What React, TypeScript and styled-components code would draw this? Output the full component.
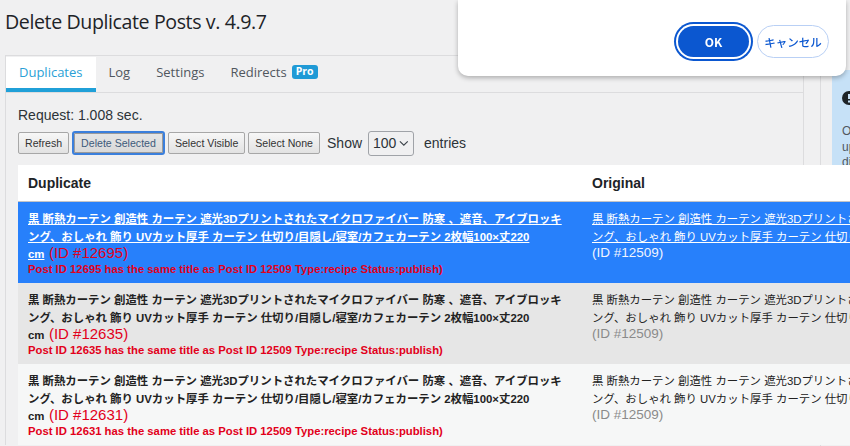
import React from "react";
import styled, { createGlobalStyle, css } from "styled-components";

const GlobalStyle = createGlobalStyle`
    html, body {
        margin: 0;
        padding: 0;
        width: 850px;
        height: 446px;
        overflow: hidden;
        background: #f0f0f1;
    }
    body {
        font-family: "Liberation Sans", "Noto Sans CJK JP", sans-serif;
        color: #1d2327;
    }
`;

const Page = styled.div`
    padding-left: 5px;
`;

const Heading = styled.h1`
    margin: 0;
    height: 55px;
    padding-top: 8px;
    box-sizing: border-box;
    font-family: "Open Sans", sans-serif;
    font-size: 19.6px;
    font-weight: 400;
    letter-spacing: -0.4px;
    color: #1d2327;
`;

const Columns = styled.div`
    display: flex;
    align-items: flex-start;
    gap: 16px;
`;

const Main = styled.div`
    flex: none;
    width: 799px;
    box-sizing: border-box;
    border: 1px solid #dcdcde;
    border-bottom: 0;
`;

const TabBar = styled.ul`
    display: flex;
    margin: 0;
    padding: 1px 0 0;
    list-style: none;
    border-bottom: 1px solid #dcdcde;
`;

const Tab = styled.li<{ $active?: boolean }>`
    display: flex;
    align-items: center;
    gap: 5px;
    height: 35px;
    padding: 0 13px 5px;
    box-sizing: border-box;
    font-family: "Open Sans", sans-serif;
    font-size: 13px;
    color: #50575e;
    ${(p) =>
        p.$active &&
        css`
            background: #fff;
            color: #2a9fd6;
            box-shadow: inset 0 -4px 0 #20a0d8;
        `}
`;

const ProBadge = styled.span`
    display: inline-block;
    padding: 1px 4px 2px;
    border-radius: 3px;
    background: #1f9ad6;
    color: #fff;
    font-family: "Open Sans", sans-serif;
    font-size: 10.5px;
    font-weight: 700;
    line-height: 11px;
`;

const Content = styled.div`
    padding: 13px 0 0 12px;
`;

const Request = styled.div`
    font-size: 14px;
    line-height: 18px;
    color: #2c3338;
`;

const Toolbar = styled.div`
    display: flex;
    align-items: center;
    gap: 3px;
    margin-top: 6px;
    height: 26px;
`;

const Button = styled.button<{ $focused?: boolean }>`
    height: 22px;
    padding: 0 6px;
    border: 1px solid #a7a7a7;
    border-radius: 2px;
    background: linear-gradient(#f7f7f7, #e2e2e2);
    font-family: "Liberation Sans", sans-serif;
    font-size: 10.6px;
    white-space: nowrap;
    color: #333;
    ${(p) =>
        p.$focused &&
        css`
            height: 24px;
            padding: 0 7px;
            border: 2px solid #3b7fdc;
            border-radius: 3px;
            background: linear-gradient(#e6e6e6, #d9d9d9);
            box-shadow: inset 0 0 0 1px #9a9a9a;
            color: #3d5a7a;
        `}
`;

const ShowLabel = styled.span`
    margin-left: 4px;
    font-size: 14px;
    color: #2c3338;
`;

const Select = styled.div`
    display: flex;
    align-items: center;
    gap: 3px;
    height: 25px;
    width: 46px;
    box-sizing: border-box;
    margin: 0 3px;
    padding: 0 4px;
    border: 1px solid #a0a3a8;
    border-radius: 3px;
    font-size: 14px;
    color: #2c3338;
`;

const Table = styled.div`
    position: relative;
    z-index: 1;
    margin-top: 9px;
    width: 1140px;
`;

const Grid = styled.div`
    display: grid;
    grid-template-columns: 564px 576px;
`;

const HeadRow = styled(Grid)`
    height: 36px;
    align-items: center;
    background: #fff;
    border-bottom: 1px solid #c3c4c7;
    font-size: 14px;
    font-weight: 700;
`;

const HeadCell = styled.div`
    padding: 0 10px;
`;

const Row = styled(Grid)<{ $tone: "selected" | "odd" | "even" }>`
    height: 81px;
    background: ${(p) =>
        p.$tone === "selected" ? "#2780fb" : p.$tone === "odd" ? "#e6e6e6" : "#f6f7f7"};
    color: ${(p) => (p.$tone === "selected" ? "#fff" : "#222")};
`;

const Cell = styled.div`
    padding: 8px 10px 0;
    overflow: hidden;
    white-space: nowrap;
    line-height: 16.5px;
`;

const Title = styled.span<{ $bold?: boolean; $link?: boolean }>`
    font-size: 11.4px;
    font-weight: ${(p) => (p.$bold ? 700 : 400)};
    text-decoration: ${(p) => (p.$link ? "underline" : "none")};
`;

const DupId = styled.span`
    font-size: 15px;
    color: #e2001a;
`;

const Note = styled.div`
    margin-top: -2px;
    font-size: 11.3px;
    line-height: 16px;
    font-weight: 700;
    color: #e2001a;
`;

const OrigId = styled.div<{ $light?: boolean }>`
    font-size: 13.5px;
    line-height: 16px;
    color: ${(p) => (p.$light ? "#f1f5ff" : "#8a8a8a")};
`;

const Sidebar = styled.aside`
    flex: none;
    width: 320px;
    height: 400px;
    padding: 15px 0 0 11px;
    box-sizing: border-box;
    border-left: 1px solid #dcdcde;
`;

const Notice = styled.div`
    padding: 20px 10px 0;
    height: 95px;
    background: #c6e1f7;
    font-size: 12px;
    color: #50575e;
    white-space: nowrap;
`;

const NoticeHead = styled.div`
    display: flex;
    align-items: center;
    gap: 6px;
    font-weight: 700;
    font-size: 13px;
    color: #1d2327;
    margin-bottom: 19px;
`;

const NoticeText = styled.p`
    margin: 0;
    line-height: 15.5px;
`;

const Dialog = styled.div`
    position: fixed;
    z-index: 10;
    top: 0;
    left: 458px;
    width: 388px;
    height: 76px;
    box-sizing: border-box;
    padding: 26px 17px 0;
    display: flex;
    justify-content: flex-end;
    align-items: flex-start;
    gap: 8px;
    background: #fff;
    border-radius: 0 0 10px 10px;
    box-shadow: 0 2px 5px rgba(0, 0, 0, 0.28);
`;

const DialogButton = styled.button<{ $primary?: boolean }>`
    flex: none;
    height: 31px;
    padding: 0;
    border-radius: 17px;
    font-family: "Noto Sans CJK JP", "Noto Sans", sans-serif;
    font-size: 12px;
    font-weight: 700;
    white-space: nowrap;
    ${(p) =>
        p.$primary
            ? css`
                  width: 71px;
                  border: 0;
                  background: #0b57d0;
                  color: #fff;
                  box-shadow: 0 0 0 2px #fff, 0 0 0 4px #0b57d0;
              `
            : css`
                  width: 72px;
                  height: 33px;
                  margin-top: -1px;
                  border: 1px solid #b9d0f5;
                  background: #fff;
                  color: #0b57d0;
                  font-size: 11.5px;
                  font-weight: 500;
              `}
`;

const titleLines = [
    "黒 断熱カーテン 創造性 カーテン 遮光3Dプリントされたマイクロファイバー 防寒 、遮音、アイブロッキ",
    "ング、おしゃれ 飾り UVカット厚手 カーテン 仕切り/目隠し/寝室/カフェカーテン 2枚幅100×丈220",
    "cm",
];

const rows: { id: number; tone: "selected" | "odd" | "even" }[] = [
    { id: 12695, tone: "selected" },
    { id: 12635, tone: "odd" },
    { id: 12631, tone: "even" },
];

const ORIGINAL_ID = 12509;

const Chevron = () => (
    <svg width="11" height="7" viewBox="0 0 11 7" fill="none">
        <path d="M1 1l4.5 4.5L10 1" stroke="#3c434a" strokeWidth="1.3" />
    </svg>
);

const App = () => {
    return (
        <>
            <GlobalStyle />
            <Page>
                <Heading>Delete Duplicate Posts v. 4.9.7</Heading>
                <Columns>
                    <Main>
                        <TabBar>
                            <Tab $active>Duplicates</Tab>
                            <Tab>Log</Tab>
                            <Tab>Settings</Tab>
                            <Tab>
                                Redirects <ProBadge>Pro</ProBadge>
                            </Tab>
                        </TabBar>
                        <Content>
                            <Request>Request: 1.008 sec.</Request>
                            <Toolbar>
                                <Button>Refresh</Button>
                                <Button $focused>Delete Selected</Button>
                                <Button>Select Visible</Button>
                                <Button>Select None</Button>
                                <ShowLabel>Show</ShowLabel>
                                <Select>
                                    100
                                    <Chevron />
                                </Select>
                                <ShowLabel>entries</ShowLabel>
                            </Toolbar>
                            <Table>
                                <HeadRow>
                                    <HeadCell>Duplicate</HeadCell>
                                    <HeadCell>Original</HeadCell>
                                </HeadRow>
                                {rows.map((r) => {
                                    const selected = r.tone === "selected";
                                    return (
                                        <Row key={r.id} $tone={r.tone}>
                                            <Cell>
                                                <Title $bold $link={selected}>
                                                    {titleLines[0]}
                                                    <br />
                                                    {titleLines[1]}
                                                    <br />
                                                    {titleLines[2]}
                                                </Title>{" "}
                                                <DupId>(ID #{r.id})</DupId>
                                                <Note>
                                                    Post ID {r.id} has the same title as Post ID {ORIGINAL_ID} Type:recipe
                                                    Status:publish)
                                                </Note>
                                            </Cell>
                                            <Cell>
                                                <Title $link={selected}>
                                                    {titleLines[0]}
                                                    <br />
                                                    {titleLines[1]} {titleLines[2]}
                                                </Title>
                                                <OrigId $light={selected}>(ID #{ORIGINAL_ID})</OrigId>
                                            </Cell>
                                        </Row>
                                    );
                                })}
                            </Table>
                        </Content>
                    </Main>
                    <Sidebar>
                        <Notice>
                            <NoticeHead>
                                <svg width="14" height="14" viewBox="0 0 14 14">
                                    <circle cx="7" cy="7" r="7" fill="#1d2327" />
                                    <rect x="6" y="3" width="2" height="5" fill="#c6e1f7" />
                                    <rect x="6" y="9.5" width="2" height="2" fill="#c6e1f7" />
                                </svg>
                                Upgrade to Pro
                            </NoticeHead>
                            <NoticeText>
                                Our Pro version is available now,
                                <br />
                                upgrade to find and remove duplicates
                                <br />
                                directly and set up automatic redirects.
                            </NoticeText>
                        </Notice>
                    </Sidebar>
                </Columns>
            </Page>
            <Dialog>
                <DialogButton $primary>OK</DialogButton>
                <DialogButton>キャンセル</DialogButton>
            </Dialog>
        </>
    );
};

export default App;
